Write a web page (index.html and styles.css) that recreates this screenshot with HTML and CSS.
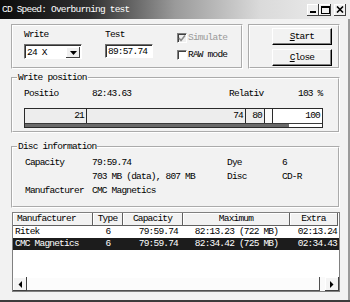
FILE: index.html
```html
<!DOCTYPE html>
<html lang="en">
<head>
  <meta charset="UTF-8" />
  <meta name="viewport" content="width=device-width, initial-scale=1.0"/>
  <title>CD Speed: Overburning test</title>
  <link rel="stylesheet" href="styles.css">
</head>
<body>

  <div class="window">
    <div class="titlebar">
      <span class="title">CD Speed: Overburning test</span>
      <div class="caption-btns">
        <span class="cap-btn"><svg width="8" height="7" viewBox="0 0 8 7"><rect x="1" y="5" width="6" height="2" fill="#000"/></svg></span>
        <span class="cap-btn"><svg width="9" height="8" viewBox="0 0 9 8"><rect x="0.5" y="0.5" width="8" height="7" fill="none" stroke="#000"/><rect x="0" y="0" width="9" height="2" fill="#000"/></svg></span>
        <span class="cap-btn close"><svg width="8" height="7" viewBox="0 0 8 7"><path d="M1 0.5 L7 6.5 M7 0.5 L1 6.5" stroke="#000" stroke-width="1.6"/></svg></span>
      </div>
    </div>

    <div class="client">
      <div class="top-row">
        <div class="group settings">
          <div class="field write-field">
            <div class="field-label">Write</div>
            <div class="combo">
              <span class="combo-text">24 X</span>
              <span class="combo-btn"><svg width="7" height="4" viewBox="0 0 7 4"><polygon points="0,0 7,0 3.5,4" fill="#000"/></svg></span>
            </div>
          </div>
          <div class="field test-field">
            <div class="field-label">Test</div>
            <div class="edit">89:57.74</div>
          </div>
          <div class="checks">
            <div class="check disabled">
              <span class="box"><svg width="8" height="8" viewBox="0 0 8 8"><polyline points="1,4 3,6.5 7,1.5" fill="none" stroke="#8a8a8a" stroke-width="1.5"/></svg></span>
              Simulate
            </div>
            <div class="check">
              <span class="box"></span>
              RAW mode
            </div>
          </div>
        </div>

        <div class="group actions">
          <button type="button" class="btn"><u>S</u>tart</button>
          <button type="button" class="btn"><u>C</u>lose</button>
        </div>
      </div>

      <fieldset class="frame position">
        <legend>Write position</legend>
        <div class="frame-body">
          <div class="info-row pos-row">
            <span>Positio</span>
            <span>82:43.63</span>
            <span>Relativ</span>
            <span>103 %</span>
          </div>
          <div class="bar">
            <div class="segs">
              <span class="seg" style="width:62px">21</span>
              <span class="seg" style="width:159px">74</span>
              <span class="seg" style="width:19px">80</span>
              <span class="seg empty" style="width:8px"></span>
              <span class="seg last">100</span>
            </div>
            <div class="track"><div class="fill" style="width:264px"></div></div>
          </div>
        </div>
      </fieldset>

      <fieldset class="frame disc">
        <legend>Disc information</legend>
        <div class="frame-body disc-grid">
          <span>Capacity</span>
          <span>79:59.74</span>
          <span>Dye</span>
          <span>6</span>

          <span></span>
          <span>703 MB (data), 807 MB</span>
          <span>Disc</span>
          <span>CD-R</span>

          <span>Manufacturer</span>
          <span>CMC Magnetics</span>
          <span></span>
          <span></span>
        </div>
      </fieldset>

      <div class="listview">
        <div class="lv-head">
          <span class="c-name">Manufacturer</span>
          <span>Type</span>
          <span>Capacity</span>
          <span>Maximum</span>
          <span>Extra</span>
        </div>
        <div class="lv-row">
          <span class="c-name">Ritek</span>
          <span class="c-type">6</span>
          <span class="c-cap">79:59.74</span>
          <span class="c-max">82:13.23 (722 MB)</span>
          <span class="c-extra">02:13.24</span>
        </div>
        <div class="lv-row selected">
          <span class="c-name">CMC Magnetics</span>
          <span class="c-type">6</span>
          <span class="c-cap">79:59.74</span>
          <span class="c-max">82:34.42 (725 MB)</span>
          <span class="c-extra">02:34.43</span>
        </div>
        <div class="lv-fill"></div>
        <div class="hscroll">
          <span class="sb-btn"><svg width="4" height="7" viewBox="0 0 4 7"><polygon points="4,0 4,7 0.5,3.5" fill="#000"/></svg></span>
          <span class="sb-thumb"></span>
          <span class="sb-track"></span>
          <span class="sb-btn"><svg width="4" height="7" viewBox="0 0 4 7"><polygon points="0,0 0,7 3.5,3.5" fill="#000"/></svg></span>
        </div>
      </div>
    </div>
  </div>

</body>
</html>
```

FILE: styles.css
```css
* {
  box-sizing: border-box;
}

body {
  margin: 0;
  font-family: "Liberation Mono", "DejaVu Sans Mono", monospace;
  font-size: 9.5px;
  line-height: 10px;
  letter-spacing: -0.8px;
  color: #000;
  background: #f2f2f2;
}

.window {
  width: 350px;
  height: 302px;
  display: flex;
  flex-direction: column;
  background: #f2f2f2;
  border-bottom: 2px solid #3c3c3c;
}

/* title bar */
.titlebar {
  height: 19px;
  flex: none;
  display: flex;
  align-items: center;
  justify-content: space-between;
  padding: 0 4px 0 2px;
  background: linear-gradient(to right, #0c0c0c 0, #303030 90px, #9a9a9a 175px, #dadada 260px, #efefef 100%);
}

.title {
  color: #fff;
}

.caption-btns {
  display: flex;
}

.cap-btn {
  width: 12px;
  height: 12px;
  display: flex;
  align-items: center;
  justify-content: center;
  background: #f0f0f0;
  box-shadow: inset -1px -1px #404040, inset 1px 1px #fff;
}

.cap-btn.close {
  margin-left: 3px;
}

/* client area */
.client {
  flex: 1;
  display: flex;
  flex-direction: column;
  padding: 5px 8px 0 11px;
  border-right: 2px solid #9a9a9a;
}

.top-row {
  display: flex;
  gap: 5px;
  height: 45px;
}

.group {
  border: 2px groove #fff;
}

.settings {
  width: 232px;
  display: flex;
  padding: 4px 0 0 11px;
}

.field-label {
  height: 10px;
  margin-bottom: 4px;
}

.write-field {
  width: 58px;
}

.test-field {
  width: 48px;
  margin-left: 23px;
}

.combo, .edit {
  height: 15px;
  background: #fff;
  border: 1px solid;
  border-color: #707070 #fff #fff #707070;
  box-shadow: inset 1px 1px #303030;
}

.combo {
  display: flex;
  justify-content: space-between;
  padding: 2px 1px 0 2px;
}

.combo-text {
  line-height: 11px;
}

.combo-btn {
  width: 14px;
  height: 11px;
  display: flex;
  align-items: center;
  justify-content: center;
  background: #f0f0f0;
  box-shadow: inset -1px -1px #404040, inset 1px 1px #fff;
}

.edit {
  height: 14px;
  padding: 2px 0 0 2px;
}

.checks {
  margin: 3px 0 0 24px;
  display: flex;
  flex-direction: column;
  gap: 7px;
}

.check {
  display: flex;
  align-items: center;
  gap: 1px;
  height: 10px;
}

.check .box {
  width: 10px;
  height: 10px;
  display: flex;
  align-items: center;
  justify-content: center;
  background: #fff;
  border: 1px solid;
  border-color: #808080 #fff #fff #808080;
  box-shadow: inset 1px 1px #404040;
}

.check.disabled {
  color: #9a9a9a;
}

.check.disabled .box {
  background: #f0f0f0;
}

.actions {
  flex: 1;
  display: flex;
  flex-direction: column;
  align-items: flex-end;
  gap: 4px;
  padding: 2px 6px 0 0;
}

.btn {
  width: 60px;
  height: 17px;
  padding: 0;
  font: inherit;
  letter-spacing: inherit;
  color: #000;
  background: #f2f2f2;
  border: 1px solid;
  border-color: #fff #000 #000 #fff;
  box-shadow: inset -1px -1px #808080;
}

/* framed sections */
.frame {
  margin: 4px 0 0;
  padding: 0;
  min-width: 0;
  border: 2px groove #fff;
}

.frame legend {
  margin-left: 4px;
  padding: 0 1px;
  line-height: 10px;
}

.position .frame-body {
  padding: 6px 0 3px 11px;
}

.info-row {
  display: grid;
  grid-template-columns: 68px 137px 69px auto;
  height: 10px;
}

.bar {
  margin-top: 9px;
  width: 299px;
  border: 1px solid #2a2a2a;
  background: #fff;
}

.segs {
  display: flex;
  height: 14px;
}

.seg {
  height: 14px;
  line-height: 14px;
  text-align: right;
  padding-right: 2px;
  background: #ededed;
  border-right: 1px solid #2a2a2a;
}

.seg.empty {
  background: #fafafa;
}

.seg.last {
  flex: 1;
  background: #fff;
  border-right: none;
}

.track {
  height: 4px;
  border-top: 1px solid #3a3a3a;
  background: #fff;
}

.fill {
  height: 3px;
  background: #6a6a6a;
}

.disc {
  margin-top: 9px;
}

.disc-grid {
  display: grid;
  grid-template-columns: 67px 135px 55px auto;
  grid-auto-rows: 10px;
  row-gap: 4px;
  padding: 6px 0 10px 12px;
}

/* list view */
.listview {
  margin: 4px 0 0 1px;
  height: 80px;
  display: flex;
  flex-direction: column;
  background: #fff;
  border: 1px solid #808080;
}

.lv-head, .lv-row {
  display: grid;
  grid-template-columns: 80px 30px 60px 107px 48px;
}

.lv-head span {
  height: 13px;
  line-height: 12px;
  text-align: center;
  background: #f2f2f2;
  border-right: 1px solid #606060;
  border-bottom: 1px solid #606060;
  box-shadow: inset 1px 1px #fff;
}

.lv-head .c-name {
  text-align: left;
  padding-left: 4px;
}

.lv-row span {
  height: 12px;
  line-height: 12px;
  white-space: nowrap;
}

.lv-row .c-name {
  padding-left: 2px;
}

.c-type, .c-max {
  text-align: center;
}

.c-cap {
  text-align: right;
  padding-right: 5px;
}

.c-extra {
  text-align: right;
  padding-right: 1px;
}

.lv-row.selected {
  background: #1c1c1c;
  color: #fff;
}

.lv-fill {
  flex: 1;
}

.hscroll {
  height: 14px;
  display: flex;
  background: #fafafa;
}

.sb-btn {
  width: 14px;
  display: flex;
  align-items: center;
  justify-content: center;
  background: #f4f4f4;
  box-shadow: inset -1px -1px #404040, inset 1px 1px #fff;
}

.sb-thumb {
  width: 293px;
  background: #fcfcfc;
  box-shadow: inset -1px -1px #505050, inset 1px 1px #fff;
}

.sb-track {
  flex: 1;
}
```
